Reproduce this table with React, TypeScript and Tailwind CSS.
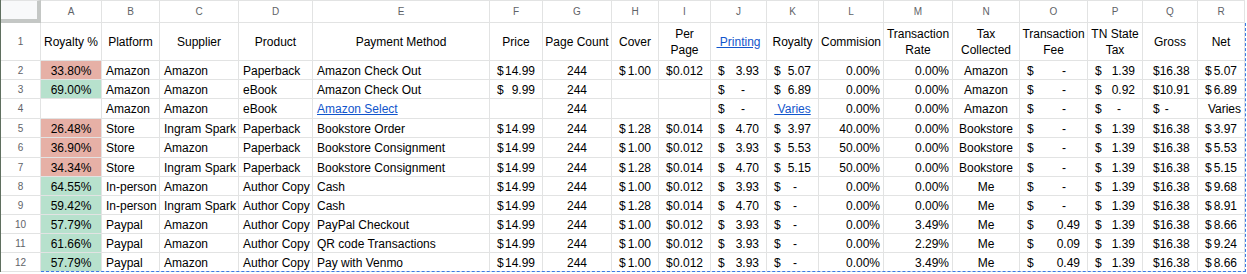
import React from 'react';

type Kind = 'l' | 'c' | 'r' | 'm' | 'link' | 'linkc';

interface Cell {
  t: string;
  k?: Kind;
  bg?: 'red' | 'green';
  dash?: 'wide';
  wide?: boolean;
}

const letters = ['A', 'B', 'C', 'D', 'E', 'F', 'G', 'H', 'I', 'J', 'K', 'L', 'M', 'N', 'O', 'P', 'Q', 'R'];

const headers: React.ReactNode[] = [
  'Royalty %',
  'Platform',
  'Supplier',
  'Product',
  'Payment Method',
  'Price',
  'Page Count',
  'Cover',
  <>Per<br />Page</>,
  <span className="text-[#1155cc] underline whitespace-pre">{' Printing'}</span>,
  'Royalty',
  'Commision',
  <>Transaction<br />Rate</>,
  <>Tax<br />Collected</>,
  <>Transaction<br />Fee</>,
  <>TN State<br />Tax</>,
  'Gross',
  'Net',
];

const m = (t: string): Cell => ({ t, k: 'm' });
const g = (t: string): Cell => ({ t, k: 'm', wide: true });
const r = (t: string): Cell => ({ t, k: 'r' });
const c = (t: string): Cell => ({ t, k: 'c' });
const l = (t: string): Cell => ({ t, k: 'l' });
const e: Cell = { t: '' };

const rows: Cell[][] = [
  [{ t: '33.80%', k: 'c', bg: 'red' }, l('Amazon'), l('Amazon'), l('Paperback'), l('Amazon Check Out'), m('14.99'), c('244'), m('1.00'), m('0.012'), m('3.93'), m('5.07'), r('0.00%'), r('0.00%'), c('Amazon'), m('-'), m('1.39'), g('16.38'), m('5.07')],
  [{ t: '69.00%', k: 'c', bg: 'green' }, l('Amazon'), l('Amazon'), l('eBook'), l('Amazon Check Out'), m('9.99'), c('244'), e, e, m('-'), m('6.89'), r('0.00%'), r('0.00%'), c('Amazon'), m('-'), m('0.92'), g('10.91'), m('6.89')],
  [e, l('Amazon'), l('Amazon'), l('eBook'), { t: 'Amazon Select', k: 'link' }, e, c('244'), e, e, m('-'), { t: ' Varies', k: 'linkc' }, r('0.00%'), r('0.00%'), c('Amazon'), m('-'), m('-'), { t: '-', k: 'm', dash: 'wide', wide: true }, r('Varies')],
  [{ t: '26.48%', k: 'c', bg: 'red' }, l('Store'), l('Ingram Spark'), l('Paperback'), l('Bookstore Order'), m('14.99'), c('244'), m('1.28'), m('0.014'), m('4.70'), m('3.97'), r('40.00%'), r('0.00%'), c('Bookstore'), m('-'), m('1.39'), g('16.38'), m('3.97')],
  [{ t: '36.90%', k: 'c', bg: 'red' }, l('Store'), l('Amazon'), l('Paperback'), l('Bookstore Consignment'), m('14.99'), c('244'), m('1.00'), m('0.012'), m('3.93'), m('5.53'), r('50.00%'), r('0.00%'), c('Bookstore'), m('-'), m('1.39'), g('16.38'), m('5.53')],
  [{ t: '34.34%', k: 'c', bg: 'red' }, l('Store'), l('Ingram Spark'), l('Paperback'), l('Bookstore Consignment'), m('14.99'), c('244'), m('1.28'), m('0.014'), m('4.70'), m('5.15'), r('50.00%'), r('0.00%'), c('Bookstore'), m('-'), m('1.39'), g('16.38'), m('5.15')],
  [{ t: '64.55%', k: 'c', bg: 'green' }, l('In-person'), l('Amazon'), l('Author Copy'), l('Cash'), m('14.99'), c('244'), m('1.00'), m('0.012'), m('3.93'), m('-'), r('0.00%'), r('0.00%'), c('Me'), m('-'), m('1.39'), g('16.38'), m('9.68')],
  [{ t: '59.42%', k: 'c', bg: 'green' }, l('In-person'), l('Ingram Spark'), l('Author Copy'), l('Cash'), m('14.99'), c('244'), m('1.28'), m('0.014'), m('4.70'), m('-'), r('0.00%'), r('0.00%'), c('Me'), m('-'), m('1.39'), g('16.38'), m('8.91')],
  [{ t: '57.79%', k: 'c', bg: 'green' }, l('Paypal'), l('Amazon'), l('Author Copy'), l('PayPal Checkout'), m('14.99'), c('244'), m('1.00'), m('0.012'), m('3.93'), m('-'), r('0.00%'), r('3.49%'), c('Me'), m('0.49'), m('1.39'), g('16.38'), m('8.66')],
  [{ t: '61.66%', k: 'c', bg: 'green' }, l('Paypal'), l('Amazon'), l('Author Copy'), l('QR code Transactions'), m('14.99'), c('244'), m('1.00'), m('0.012'), m('3.93'), m('-'), r('0.00%'), r('2.29%'), c('Me'), m('0.09'), m('1.39'), g('16.38'), m('9.24')],
  [{ t: '57.79%', k: 'c', bg: 'green' }, l('Paypal'), l('Amazon'), l('Author Copy'), l('Pay with Venmo'), m('14.99'), c('244'), m('1.00'), m('0.012'), m('3.93'), m('-'), r('0.00%'), r('3.49%'), c('Me'), m('0.49'), m('1.39'), g('16.38'), m('8.66')],
];

const gridLine = 'border-r border-b border-[#e2e3e3]';

function DataCell({ cell }: { cell: Cell }) {
  const bg = cell.bg === 'red' ? 'bg-[#e6b0a6]' : cell.bg === 'green' ? 'bg-[#b7e1cd]' : 'bg-white';
  const base = `${gridLine} ${bg} flex items-center overflow-hidden whitespace-nowrap pt-[1px]`;

  if (cell.k === 'm' && cell.t) {
    return (
      <div className={`${base} justify-between ${cell.wide ? 'pl-[10px] pr-[8px]' : 'px-[7px]'}`}>
        <span>$</span>
        <span className={cell.t === '-' ? (cell.dash === 'wide' ? 'mr-auto ml-[5px]' : 'mr-[14px]') : ''}>{cell.t}</span>
      </div>
    );
  }
  if (cell.k === 'link') {
    return (
      <div className={`${base} px-[4px]`}>
        <span className="text-[#1155cc] underline">{cell.t}</span>
      </div>
    );
  }
  if (cell.k === 'linkc') {
    return (
      <div className={`${base} justify-center`}>
        <span className="text-[#1155cc] underline whitespace-pre">{cell.t}</span>
      </div>
    );
  }
  const align = cell.k === 'c' ? 'justify-center' : cell.k === 'r' ? 'justify-end pr-[3px]' : 'pl-[4px]';
  return <div className={`${base} ${align}`}>{cell.t}</div>;
}

export default function App() {
  return (
    <div className="w-[1247px] h-[274px] bg-white overflow-hidden font-['Liberation_Sans',Arial,sans-serif] text-[12px] text-black">
      <div className="relative w-[1245px] border-l border-[#5f6f5f] grid grid-cols-[40px_61px_58px_79px_74px_177px_53px_69px_47px_52px_56px_52px_65px_69px_67px_68px_55px_55px_47px] grid-rows-[23px_38px_19px_19px_20px_19px_20px_19px_19px_19px_19px_19px_19px]">
        {/* corner */}
        <div className="bg-[#f8f9fa] border-r-[4px] border-b-[4px] border-[#c4c7c5] border-t border-t-[#e2e3e3]" />
        {letters.map((ch) => (
          <div
            key={ch}
            className={`${gridLine} border-t border-t-[#e2e3e3] bg-white flex items-center justify-center text-[10px] text-[#5f6368]`}
          >
            {ch}
          </div>
        ))}

        {/* row 1 */}
        <div className={`${gridLine} bg-white flex items-center justify-center text-[10px] text-[#5f6368]`}>1</div>
        {headers.map((h, i) => (
          <div key={i} className={`${gridLine} bg-white flex items-center justify-center text-center leading-[16px] whitespace-nowrap`}>
            <span>{h}</span>
          </div>
        ))}

        {rows.map((row, ri) => (
          <React.Fragment key={ri}>
            <div className={`${gridLine} bg-white flex items-center justify-center text-[10px] text-[#5f6368]`}>{ri + 2}</div>
            {row.map((cell, ci) => (
              <DataCell key={ci} cell={cell} />
            ))}
          </React.Fragment>
        ))}

        {/* copy selection marquee */}
        <div className="absolute left-[40px] top-[23px] w-[1205px] h-[249px] border-r border-b border-dashed border-[#3b78e7] pointer-events-none" />
      </div>
    </div>
  );
}
